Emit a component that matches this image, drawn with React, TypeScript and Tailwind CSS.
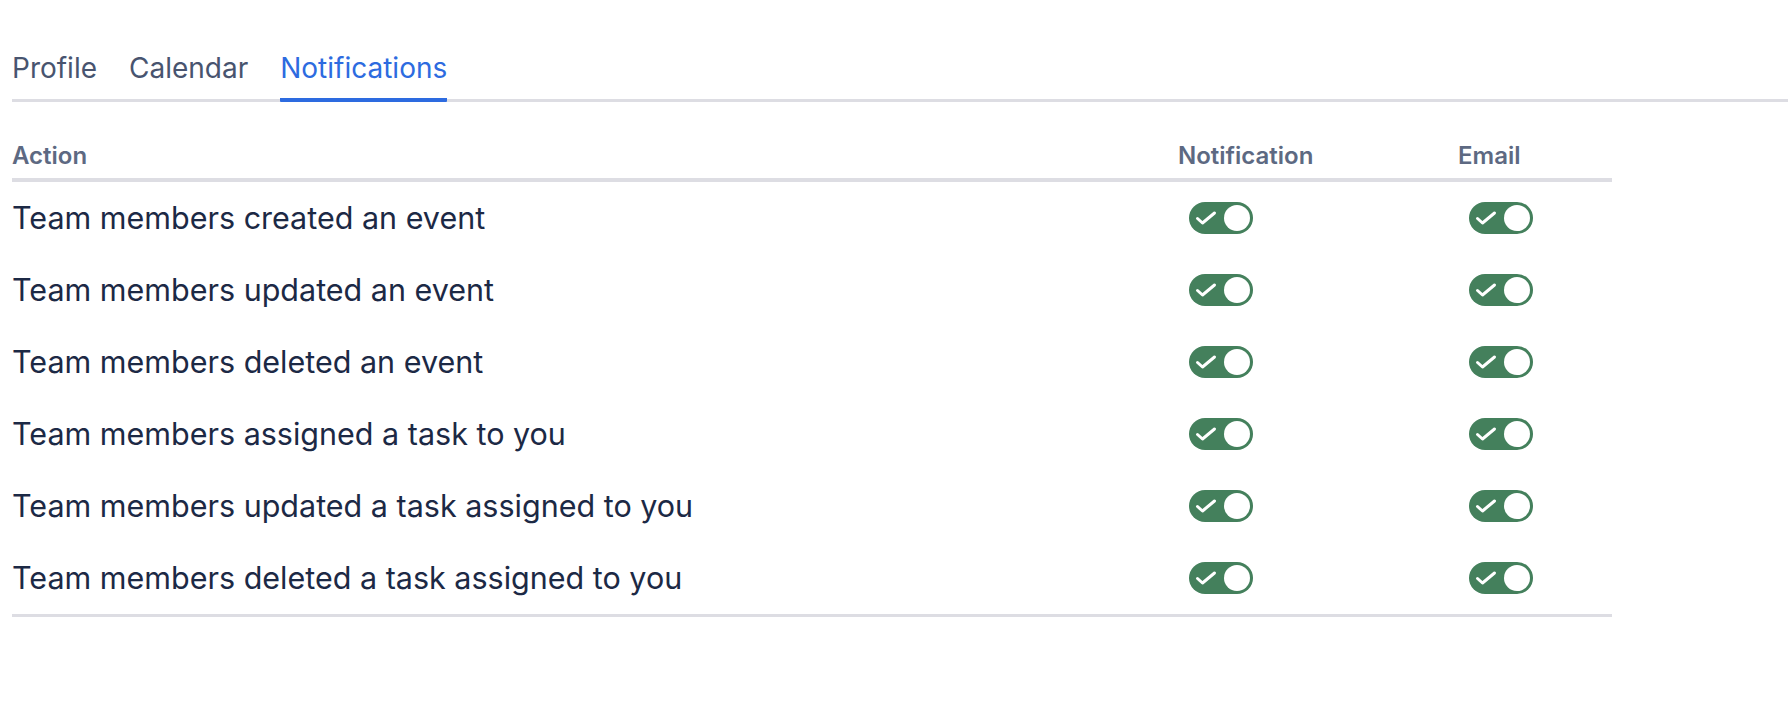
import { useState } from 'react'

const tabs = ['Profile', 'Calendar', 'Notifications']

const actions = [
  'Team members created an event',
  'Team members updated an event',
  'Team members deleted an event',
  'Team members assigned a task to you',
  'Team members updated a task assigned to you',
  'Team members deleted a task assigned to you',
]

function Toggle({ on, onChange }: { on: boolean; onChange: () => void }) {
  return (
    <button
      onClick={onChange}
      className={`relative ml-[11px] block h-8 w-16 rounded-full ${on ? 'bg-[#44805c]' : 'bg-[#c9ccd4]'}`}
    >
      {on && (
        <svg viewBox="0 0 64 32" className="absolute inset-0 h-8 w-16">
          <path
            d="M8.5 16.5 L13.5 21 L25.5 11"
            fill="none"
            stroke="white"
            strokeWidth="3"
            strokeLinecap="round"
            strokeLinejoin="round"
          />
        </svg>
      )}
      <span
        className={`absolute top-[3px] size-[26px] rounded-full bg-white ${on ? 'right-[3px]' : 'left-[3px]'}`}
      ></span>
    </button>
  )
}

function App() {
  const [active, setActive] = useState('Notifications')
  const [prefs, setPrefs] = useState(actions.map(() => ({ notif: true, email: true })))

  const flip = (i: number, key: 'notif' | 'email') =>
    setPrefs(prefs.map((p, j) => (j === i ? { ...p, [key]: !p[key] } : p)))

  return (
    <div className="min-h-screen bg-white pl-3 pt-[48px] font-['Inter',sans-serif]">
      {/* Tabs */}
      <div className="flex gap-8 border-b-[3px] border-[#dddde3]">
        {tabs.map((tab) =>
          tab === active ? (
            <button
              key={tab}
              onClick={() => setActive(tab)}
              className="-mb-[3px] rounded-b-[1px] border-b-4 border-[#2d6be0] pb-[10px] text-[28px] leading-10 text-[#2d6be0]"
            >
              {tab}
            </button>
          ) : (
            <button
              key={tab}
              onClick={() => setActive(tab)}
              className="pb-[11px] text-[28px] leading-10 text-[#48546f]"
            >
              {tab}
            </button>
          )
        )}
      </div>

      {/* Table */}
      <div className="mt-[38px] w-[1600px] border-b-[3px] border-[#dddde3]">
        <div className="grid grid-cols-[1166px_280px_1fr] border-b-4 border-[#dddde3] pb-[6px] text-[24px] font-semibold leading-8 text-[#5d6982]">
          <div>Action</div>
          <div>Notification</div>
          <div>Email</div>
        </div>
        {actions.map((a, i) => (
          <div key={a} className="grid h-[72px] grid-cols-[1166px_280px_1fr] items-center">
            <div className="text-[30.5px] leading-10 text-[#1c2945]">{a}</div>
            <div className="flex items-center">
              <Toggle on={prefs[i].notif} onChange={() => flip(i, 'notif')} />
            </div>
            <div className="flex items-center">
              <Toggle on={prefs[i].email} onChange={() => flip(i, 'email')} />
            </div>
          </div>
        ))}
      </div>
    </div>
  )
}

export default App
